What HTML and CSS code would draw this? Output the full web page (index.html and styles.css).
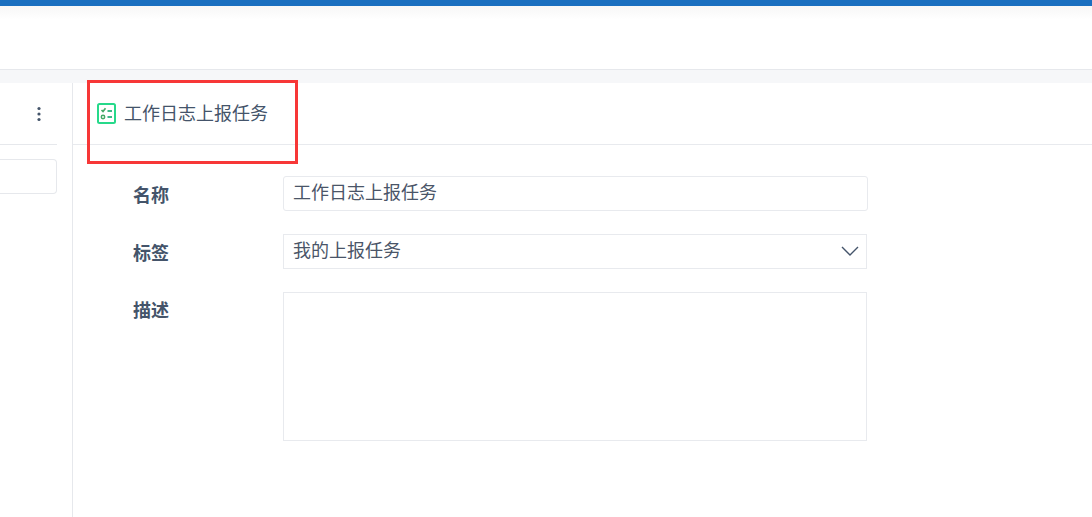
FILE: index.html
```html
<!DOCTYPE html>
<html lang="zh">
<head>
<meta charset="utf-8">
<title>工作日志上报任务</title>
<link rel="stylesheet" href="styles.css">
</head>
<body>
<div class="page">
  <div class="topbar"></div>
  <header class="header"></header>
  <div class="band"></div>
  <main class="main">
    <aside class="side">
      <div class="side-head">
        <svg class="dots" width="4" height="16" viewBox="0 0 4 16"><circle cx="2" cy="2.5" r="1.6"/><circle cx="2" cy="8" r="1.6"/><circle cx="2" cy="13.5" r="1.6"/></svg>
      </div>
      <div class="side-search"></div>
    </aside>
    <section class="content">
      <div class="title-row">
        <svg class="title-icon" width="19" height="21" viewBox="0 0 19 21" fill="none">
          <rect x="1" y="1" width="17" height="19" rx="1.5" stroke="#26d98a" stroke-width="2"/>
          <path d="M4.5 7l1.5 1.5 2.5-3.2" stroke="#45a866" stroke-width="1.7"/>
          <circle cx="6" cy="14" r="1.7" stroke="#45a866" stroke-width="1.5"/>
          <path d="M10.5 8h4.5M10.5 14h4.5" stroke="#3fb888" stroke-width="1.8"/>
        </svg>
        <span class="title-text">工作日志上报任务</span>
      </div>
      <form class="form">
        <div class="row">
          <label class="label">名称</label>
          <div class="field field-name">工作日志上报任务</div>
        </div>
        <div class="row">
          <label class="label">标签</label>
          <div class="field field-select">我的上报任务
            <svg class="chevron" width="18" height="10" viewBox="0 0 18 10" fill="none"><path d="M1 1l8 8 8-8" stroke="#44546a" stroke-width="1.4"/></svg>
          </div>
        </div>
        <div class="row">
          <label class="label label-area">描述</label>
          <div class="field field-area"></div>
        </div>
      </form>
    </section>
  </main>
  <div class="highlight"></div>
</div>
</body>
</html>
```
FILE: styles.css
```css
* { box-sizing: border-box; }
html, body { margin: 0; height: 100%; overflow: hidden; }
body { background: #fff; font-family: "Noto Sans CJK SC", "Noto Sans", sans-serif; color: #4a5568; }
.page { position: relative; display: flex; flex-direction: column; height: 517px; }
.topbar { height: 6px; background: #1a6fc0; flex: none; }
.header { height: 64px; flex: none; border-bottom: 1px solid #e6e8ec; background: linear-gradient(#f7f7f7, #fff 14px); }
.band { height: 13px; flex: none; background: #f6f7f9; }
.main { flex: 1; display: flex; min-height: 0; }
.side { width: 73px; flex: none; border-right: 1px solid #e6e8ec; padding-right: 15px; }
.side-head { height: 62px; border-bottom: 1px solid #e6e8ec; display: flex; justify-content: flex-end; align-items: flex-start; padding: 23px 16px 0 0; }
.dots { fill: #44546a; display: block; }
.side-search { height: 35px; margin-top: 14px; border: 1px solid #e6e8ec; border-left: 0; border-radius: 0 4px 4px 0; }
.content { flex: 1; min-width: 0; }
.title-row { height: 62px; border-bottom: 1px solid #e8eaee; display: flex; align-items: flex-start; padding: 20px 0 0 24px; gap: 8px; }
.title-icon { display: block; flex: none; }
.title-text { font-size: 18px; line-height: 19px; color: #44546a; }
.form { display: flex; flex-direction: column; gap: 23px; padding-top: 31px; }
.row { display: flex; align-items: flex-start; }
.label { width: 210px; flex: none; padding: 1px 0 0 60px; font-size: 18px; font-weight: 700; line-height: 34px; color: #44546a; }
.label-area { padding-top: 0; }
.field { width: 584px; height: 35px; border: 1px solid #e8eaee; padding-left: 9px; font-size: 18px; line-height: 29px; color: #4a5568; position: relative; }
.field-name { width: 585px; border-radius: 3px; }
.chevron { position: absolute; right: 7px; top: 11px; }
.field-area { height: 149px; }
.highlight { position: absolute; left: 87px; top: 80px; width: 211px; height: 84px; border: 3px solid #f73737; }
```
